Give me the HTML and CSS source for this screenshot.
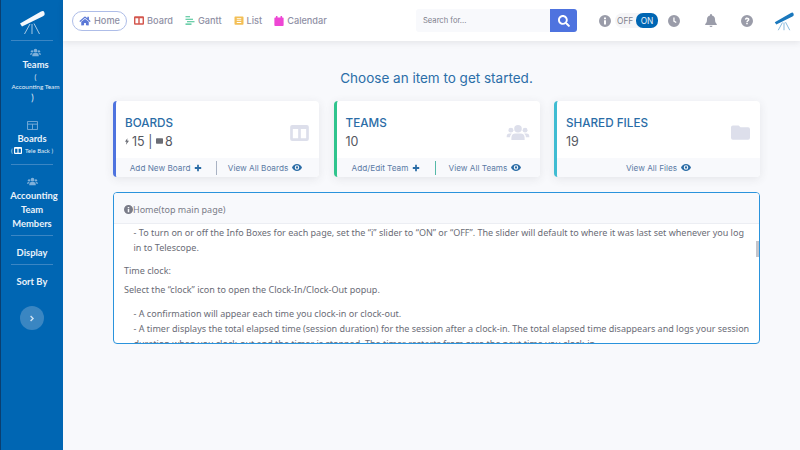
FILE: index.html
```html
<!DOCTYPE html>
<html lang="en">
<head>
<meta charset="utf-8">
<title>Telescope</title>
<link rel="stylesheet" href="styles.css">
</head>
<body>
<svg class="defs" width="0" height="0" aria-hidden="true">
  <symbol id="scope" viewBox="0 0 26 26">
    <path d="M1 14.500 L22 2.500 Q24.500 1.200 25.300 3.200 L25.700 5 Q25.800 6.600 24 7.300 L3 17.500 Z" fill="currentColor"/>
    <path d="M11 15 L5.500 25 M13 15 L13 25 M15 14.500 L20.500 25" fill="none" stroke="currentColor" stroke-width=".9" opacity=".75"/>
  </symbol>
  <symbol id="users" viewBox="0 0 24 18">
    <circle cx="12" cy="5" r="4" fill="currentColor"/><circle cx="4.500" cy="6.500" r="2.600" fill="currentColor"/><circle cx="19.500" cy="6.500" r="2.600" fill="currentColor"/>
    <path d="M5 17v-2.500Q5 10 9.500 10h5q4.500 0 4.500 4.500V17Z M0 13.500Q0 10 3 10h2.500Q3.500 11.500 3.500 14H0Z M24 13.500Q24 10 21 10h-2.500q2 1.500 2 4H24Z" fill="currentColor"/>
  </symbol>
  <symbol id="eye" viewBox="0 0 20 14">
    <path fill-rule="evenodd" d="M10 0C5.500 0 2 3 0 7c2 4 5.500 7 10 7s8-3 10-7c-2-4-5.500-7-10-7Zm0 2.500a4.500 4.500 0 1 1 0 9 4.500 4.500 0 0 1 0-9Z" fill="currentColor"/><circle cx="10" cy="7" r="2.300" fill="currentColor"/>
  </symbol>
  <symbol id="plus" viewBox="0 0 10 10">
    <path d="M5 1v8M1 5h8" stroke="currentColor" stroke-width="2.200" fill="none"/>
  </symbol>
  <symbol id="book" viewBox="0 0 14 12">
    <path fill-rule="evenodd" d="M1.500 0h11A1.500 1.500 0 0 1 14 1.500v9a1.500 1.500 0 0 1-1.500 1.500h-11A1.500 1.500 0 0 1 0 10.500v-9A1.500 1.500 0 0 1 1.500 0ZM2 3v7h4V3Zm6 0v7h4V3Z" fill="currentColor"/>
  </symbol>
</svg>

<div class="app">
  <aside class="side">
    <div class="side-logo"><svg class="logo-svg"><use href="#scope"/></svg></div>
    <div class="side-item side-teams">
      <svg class="side-ic"><use href="#users"/></svg>
      <div class="side-title">Teams</div>
      <div class="side-paren">(</div>
      <div class="side-small">Accounting Team</div>
      <div class="side-paren side-paren-b">)</div>
    </div>
    <div class="side-item side-boards">
      <svg class="side-ic side-ic-b" viewBox="0 0 12 10"><path d="M.5.5h11v9H.500ZM.5 3.500h11M6 3.500v6" fill="none" stroke="currentColor"/></svg>
      <div class="side-title">Boards</div>
      <div class="side-sub">( <svg class="side-book"><use href="#book"/></svg> &nbsp;Tele Back )</div>
    </div>
    <div class="side-item side-members">
      <svg class="side-ic"><use href="#users"/></svg>
      <div class="side-title side-lines"><span class="side-shift">Accounting</span><br>Team<br>Members</div>
    </div>
    <div class="side-item side-plain"><div class="side-title">Display</div></div>
    <div class="side-item side-plain side-last"><div class="side-title">Sort By</div></div>
    <div class="side-toggle"><svg viewBox="0 0 8 10" class="chev"><path d="M2 1.500 5.500 5 2 8.500" fill="none" stroke="currentColor" stroke-width="2"/></svg></div>
  </aside>

  <div class="page">
    <header class="top">
      <nav class="nav">
        <a class="nav-item nav-home"><svg class="ic-home" viewBox="0 0 576 512"><path fill="currentColor" d="M280.37 148.26L96 300.11V464a16 16 0 0 0 16 16l112.06-.29a16 16 0 0 0 15.92-16V368a16 16 0 0 1 16-16h64a16 16 0 0 1 16 16v95.64a16 16 0 0 0 16 16.05L464 480a16 16 0 0 0 16-16V300L295.67 148.26a12.19 12.19 0 0 0-15.3 0zM571.6 251.47L488 182.56V44.05a12 12 0 0 0-12-12h-56a12 12 0 0 0-12 12v72.61L318.47 43a48 48 0 0 0-61 0L4.34 251.47a12 12 0 0 0-1.6 16.9l25.5 31A12 12 0 0 0 45.15 301l235.22-193.74a12.19 12.19 0 0 1 15.3 0L530.9 301a12 12 0 0 0 16.9-1.6l25.5-31a12 12 0 0 0-1.7-16.93z"/></svg>Home</a>
        <a class="nav-item"><svg class="ic-nav c-red"><use href="#book"/></svg>Board</a>
        <a class="nav-item"><svg class="ic-nav c-green" viewBox="0 0 12 12"><path d="M0 1h6M0 4.300h10M2 7.600h10M0 10.900h8" stroke="currentColor" stroke-width="1.500"/></svg>Gantt</a>
        <a class="nav-item"><svg class="ic-nav c-yellow" viewBox="0 0 12 12"><path fill-rule="evenodd" d="M1 .5h10a1 1 0 0 1 1 1v9a1 1 0 0 1-1 1H1a1 1 0 0 1-1-1v-9a1 1 0 0 1 1-1ZM3 3v1.200h6V3Zm0 2.500v1.200h6V5.500ZM3 8v1.200h6V8Z" fill="currentColor"/></svg>List</a>
        <a class="nav-item"><svg class="ic-nav c-pink" viewBox="0 0 12 13"><path d="M2 0h2v2h4V0h2v2h1a1 1 0 0 1 1 1v9a1 1 0 0 1-1 1H1a1 1 0 0 1-1-1V3a1 1 0 0 1 1-1h1Z" fill="currentColor"/></svg>Calendar</a>
      </nav>
      <form class="search">
        <span class="search-input">Search for...</span>
        <span class="search-btn"><svg class="ic-search" viewBox="0 0 512 512"><path fill="currentColor" d="M505 442.700L405.300 343c-4.500-4.500-10.600-7-17-7H372c27.600-35.300 44-79.700 44-128C416 93.100 322.900 0 208 0S0 93.100 0 208s93.100 208 208 208c48.300 0 92.700-16.400 128-44v16.300c0 6.400 2.500 12.500 7 17l99.700 99.700c9.400 9.400 24.600 9.400 33.900 0l28.300-28.300c9.400-9.400 9.400-24.600.1-34zM208 336c-70.700 0-128-57.200-128-128 0-70.700 57.200-128 128-128 70.700 0 128 57.200 128 128 0 70.700-57.200 128-128 128z"/></svg></span>
      </form>
      <div class="tools">
        <svg class="tool" viewBox="0 0 12 12"><path fill-rule="evenodd" d="M6 0a6 6 0 1 1 0 12A6 6 0 0 1 6 0ZM5 2.500v1.800h2V2.500ZM5 5.300v4.200h2V5.300Z" fill="currentColor"/></svg>
        <div class="switch"><span class="sw-off">OFF</span><span class="sw-on">ON</span></div>
        <svg class="tool tool-clock" viewBox="0 0 12 12"><path fill-rule="evenodd" d="M6 0a6 6 0 1 1 0 12A6 6 0 0 1 6 0ZM5.300 2.500v4l2.600 1.600.7-1.100-2-1.200V2.500Z" fill="currentColor"/></svg>
        <svg class="tool tool-bell" viewBox="0 0 12 13"><path d="M6 0a1 1 0 0 1 1 1v.6a4 4 0 0 1 3 4c0 3 1.300 3.900 1.800 4.600V11H.2v-.8C.7 9.500 2 8.600 2 5.600a4 4 0 0 1 3-4V1a1 1 0 0 1 1-1ZM4.500 11.700h3a1.500 1.300 0 0 1-3 0Z" fill="currentColor"/></svg>
        <svg class="tool tool-help" viewBox="0 0 12 12"><path fill-rule="evenodd" d="M6 0a6 6 0 1 1 0 12A6 6 0 0 1 6 0ZM3.800 4.300l1.300.6c.1-.5.400-.8.900-.8s.8.300.8.600c0 .7-1.500.8-1.500 2.300h1.500c0-.9 1.600-1 1.600-2.500C8.400 3.300 7.300 2.600 6 2.600c-1.100 0-1.800.6-2.200 1.700ZM5.200 7.700v1.600h1.600V7.700Z" fill="currentColor"/></svg>
        <svg class="tool-scope"><use href="#scope"/></svg>
      </div>
    </header>

    <main class="main">
      <h1 class="headline">Choose an item to get started.</h1>
      <section class="cards">
        <article class="card card-blue">
          <div class="card-body">
            <div>
              <h2 class="card-title">BOARDS</h2>
              <div class="card-num"><svg class="mini mini-bolt" viewBox="0 0 6 10"><path d="M3.500 0 0 5.500h2.200L1.500 10 6 4H3.500Z" fill="currentColor"/></svg>15 | <svg class="mini mini-box" viewBox="0 0 10 8"><path d="M1 0h8a1 1 0 0 1 1 1v6a1 1 0 0 1-1 1H1a1 1 0 0 1-1-1V1a1 1 0 0 1 1-1Z" fill="currentColor"/></svg>8</div>
            </div>
            <svg class="card-ic card-ic-board"><use href="#book"/></svg>
          </div>
          <div class="card-foot">
            <a class="foot-link">Add New Board <svg class="foot-plus"><use href="#plus"/></svg></a>
            <span class="foot-sep"></span>
            <a class="foot-link foot-link-end">View All Boards <svg class="foot-eye"><use href="#eye"/></svg></a>
          </div>
        </article>
        <article class="card card-green">
          <div class="card-body">
            <div>
              <h2 class="card-title">TEAMS</h2>
              <div class="card-num">10</div>
            </div>
            <svg class="card-ic card-ic-team"><use href="#users"/></svg>
          </div>
          <div class="card-foot">
            <a class="foot-link">Add/Edit Team <svg class="foot-plus"><use href="#plus"/></svg></a>
            <span class="foot-sep foot-sep-g"></span>
            <a class="foot-link foot-link-end">View All Teams <svg class="foot-eye"><use href="#eye"/></svg></a>
          </div>
        </article>
        <article class="card card-teal">
          <div class="card-body">
            <div>
              <h2 class="card-title">SHARED FILES</h2>
              <div class="card-num">19</div>
            </div>
            <svg class="card-ic card-ic-folder" viewBox="0 0 20 15"><path d="M2 0h6l2 2h8a2 2 0 0 1 2 2v9a2 2 0 0 1-2 2H2a2 2 0 0 1-2-2V2a2 2 0 0 1 2-2Z" fill="currentColor"/></svg>
          </div>
          <div class="card-foot">
            <a class="foot-link">View All Files <svg class="foot-eye"><use href="#eye"/></svg></a>
          </div>
        </article>
      </section>

      <section class="info">
        <div class="info-head"><svg class="info-ic" viewBox="0 0 12 12"><path fill-rule="evenodd" d="M6 0a6 6 0 1 1 0 12A6 6 0 0 1 6 0ZM5 2.500v1.800h2V2.500ZM5 5.300v4.200h2V5.300Z" fill="currentColor"/></svg>Home(top main page)</div>
        <div class="info-body">
          <div class="info-text">
            <p class="para-indent para-first">- To turn on or off the Info Boxes for each page, set the “i” slider to “ON” or “OFF”. The slider will default to where it was last set whenever you log in to Telescope.</p>
            <p class="para-clock">Time clock:</p>
            <p class="para-select">Select the “clock” icon to open the Clock-In/Clock-Out popup.</p>
            <p class="para-indent">- A confirmation will appear each time you clock-in or clock-out.<br>- A timer displays the total elapsed time (session duration) for the session after a clock-in. The total elapsed time disappears and logs your session duration when you clock-out and the timer is stopped. The timer restarts from zero the next time you clock-in.</p>
          </div>
          <span class="scroll-thumb"></span>
        </div>
      </section>
    </main>
  </div>
</div>
</body>
</html>
```
FILE: styles.css
```css
* { box-sizing: border-box; }
html, body { margin: 0; height: 100%; overflow: hidden; }
body { font-family: "Noto Sans", "Open Sans", sans-serif; background: #f8f9fc; color: #5a5c69; }
.defs { position: absolute; }
svg { display: block; }
a { color: inherit; text-decoration: none; }

.app { display: flex; width: 800px; height: 450px; }

/* Sidebar */
.side { width: 63px; flex: none; background: #0066b3; border-left: 1px solid #0b3f70; color: #e4eef8; display: flex; flex-direction: column; align-items: center; font-family: "Lato", "Noto Sans", sans-serif; }
.side-logo { width: 100%; height: 41px; display: flex; justify-content: center; align-items: center; position: relative; padding-top: 2px; }
.side-logo::after { content: ""; position: absolute; left: 10px; right: 10px; bottom: 0; border-bottom: 1px solid #3b86c4; }
.logo-svg { width: 26px; height: 26px; color: #f4f8fc; }
.side-item { width: 100%; text-align: center; display: flex; flex-direction: column; align-items: center; }
.side-ic { width: 11px; height: 9px; color: #7fb0da; flex: none; }
.side-title { font-size: 9.400px; font-weight: 700; color: #eaf2fa; line-height: 14px; }
.side-teams { padding: 7px 0 0 7px; height: 77px; }
.side-teams .side-title { margin-top: 1px; }
.side-paren { font-size: 7px; line-height: 10px; }
.side-paren-b { font-size: 9px; line-height: 12px; margin: 1px 6px 0 0; }
.side-small { font-size: 6.400px; line-height: 9px; white-space: nowrap; }
.side-boards { height: 47px; padding-top: 3px; position: relative; }
.side-boards .side-title { margin-top: 2px; }
.side-boards::after { content: ""; position: absolute; left: 10px; right: 10px; bottom: 0; border-bottom: 1px solid #3b86c4; }
.side-sub { font-size: 6px; display: flex; align-items: center; white-space: pre; line-height: 9px; }
.side-book { width: 8px; height: 7px; color: #fff; }
.side-members { height: 71px; padding-top: 12px; position: relative; }
.side-lines { line-height: 14px; margin-top: 3px; }
.side-shift { display: inline-block; margin-left: 4px; }
.side-members::after, .side-plain::after { content: ""; position: absolute; left: 10px; right: 10px; bottom: 0; border-bottom: 1px solid #3b86c4; }
.side-plain { height: 29px; justify-content: center; position: relative; padding-top: 5px; }
.side-last::after { display: none; }
.side-toggle { margin-top: 12px; width: 24px; height: 24px; border-radius: 50%; background: #3a86c2; display: flex; align-items: center; justify-content: center; color: #cfe2f3; }
.chev { width: 6px; height: 7px; }

/* Top bar */
.page { flex: 1; min-width: 0; display: flex; flex-direction: column; }
.top { height: 41px; flex: none; background: #fff; box-shadow: 0 2px 6px rgba(58,59,69,.1); display: flex; align-items: center; position: relative; padding-left: 9px; }
.nav { display: flex; align-items: center; width: 344px; font-family: "Inter", "Noto Sans", sans-serif; font-size: 9.200px; color: #8f90a5; font-weight: 500; }
.nav-item { display: flex; align-items: center; gap: 3px; margin-right: 12px; }
.nav-home { border: 1px solid #aebde8; border-radius: 10px; height: 20px; width: 55px; justify-content: center; margin-right: 7px; }
.ic-home { width: 12px; height: 10px; color: #5b78d6; }
.ic-nav { width: 10px; height: 9px; }
.c-red { color: #d4574e; }
.c-green { color: #3fc08f; }
.c-yellow { color: #f3bf55; }
.c-pink { color: #ee46d4; height: 10px; }

.search { display: flex; width: 161px; height: 23px; }
.search-input { flex: 1; background: #f8f9fc; font-family: "Inter", "Noto Sans", sans-serif; font-size: 7.600px; color: #7d7f8c; display: flex; align-items: center; padding-left: 7px; border-radius: 3px 0 0 3px; }
.search-btn { width: 27px; background: #4e73df; border-radius: 0 3px 3px 0; display: flex; align-items: center; justify-content: center; color: #fff; }
.ic-search { width: 12px; height: 12px; }

.tools { display: flex; align-items: center; margin-left: 22px; color: #9a9ca9; }
.tool { width: 12px; height: 12px; flex: none; }
.switch { display: flex; align-items: center; width: 43px; height: 15px; margin-left: 4px; background: #f5f5f7; border-radius: 8px; font-family: "Inter", "Noto Sans", sans-serif; font-size: 8.400px; }
.sw-off { padding-left: 2px; width: 21px; color: #7d7f8c; }
.sw-on { width: 22px; height: 15px; background: #0066b3; color: #e8f2fa; border-radius: 7px; display: flex; align-items: center; justify-content: center; }
.tool-clock { margin-left: 10px; }
.tool-bell { margin-left: 25px; height: 13px; }
.tool-help { margin-left: 24px; }
.tool-scope { width: 20px; height: 20px; margin-left: 21px; color: #1a78bd; }

/* Main */
.main { flex: 1; padding: 0 40px 0 50px; min-height: 0; }
.headline { margin: 28px 0 13px; height: 19px; line-height: 18px; font-family: "Inter", "Noto Sans", sans-serif; font-size: 13.500px; font-weight: 400; color: #2b6ea8; text-align: center; }

.cards { display: grid; grid-template-columns: 206px 206px 206px; column-gap: 14.500px; }
.card { height: 76px; background: #fff; border-radius: 4px; box-shadow: 0 2px 10px rgba(58,59,69,.1); display: flex; flex-direction: column; border-left: 3px solid; overflow: hidden; }
.card-blue { border-left-color: #4e73df; }
.card-green { border-left-color: #2fc48d; }
.card-teal { border-left-color: #3fbcd2; }
.card-body { flex: 1; display: flex; justify-content: space-between; align-items: center; padding: 6px 10px 0 9px; }
.card-title { margin: 0; font-family: "Inter", "Noto Sans", sans-serif; font-size: 11.700px; font-weight: 500; color: #2a6ca6; line-height: 14px; }
.card-num { font-family: "Inter", "Noto Sans", sans-serif; font-size: 12.500px; color: #55575f; display: flex; align-items: center; line-height: 17px; margin-top: 3px; white-space: pre; }
.mini { color: #6b6d75; }
.mini-bolt { width: 4px; height: 7px; margin-right: 3px; }
.mini-box { width: 7px; height: 6px; margin-right: 2px; }
.card-ic { color: #dddfeb; flex: none; }
.card-ic-board { width: 19px; height: 16px; }
.card-ic-team { width: 24px; height: 17px; }
.card-ic-folder { width: 19px; height: 15px; }
.card-foot { height: 19px; flex: none; background: #f8f9fc; display: flex; align-items: center; justify-content: space-evenly; font-family: "Inter", "Noto Sans", sans-serif; font-size: 8.200px; color: #5c7ba5; }
.foot-link { display: flex; align-items: center; gap: 4px; }
.foot-link-end { margin-right: 3px; margin-left: -3px; }
.foot-sep { width: 1px; height: 14px; background: #a9b2c3; }
.foot-sep-g { background: #55b9a8; }
.foot-plus { width: 8px; height: 8px; color: #2a6ca6; }
.foot-eye { width: 10px; height: 7px; color: #2a6ca6; }

.info { margin-top: 15px; width: 647px; height: 152px; border: 1px solid #2a93dc; border-radius: 4px; background: #fff; display: flex; flex-direction: column; overflow: hidden; }
.info-head { height: 31px; flex: none; background: #f8f9fc; border-bottom: 1px solid #eceef3; display: flex; align-items: center; padding: 2px 0 0 10px; font-size: 9px; color: #7a7c88; }
.info-ic { width: 9px; height: 9px; color: #7a7c88; }
.info-body { flex: 1; min-height: 0; position: relative; overflow: hidden; padding: 1px 7px 0 10px; font-size: 9.030px; color: #6a6c76; line-height: 15px; }
.info-text p { margin: 0; }
.para-indent { padding-left: 9.500px; }
.para-first { margin-bottom: 8px !important; }
.para-clock { margin-bottom: 3.500px !important; }
.para-select { margin-bottom: 9px !important; }
.scroll-thumb { position: absolute; right: 0; top: 17px; width: 3px; height: 16px; background: #c3c5cc; }
```
